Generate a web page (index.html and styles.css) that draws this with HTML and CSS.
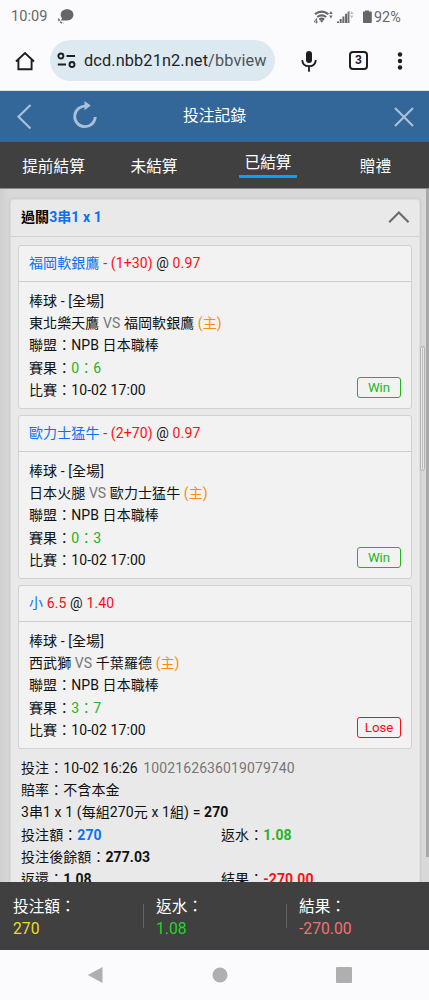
FILE: index.html
```html
<!DOCTYPE html>
<html lang="zh-Hant">
<head>
<meta charset="utf-8">
<title>投注記錄</title>
<link rel="stylesheet" href="styles.css">
</head>
<body>
<div class="status">
  <span class="clock">10:09</span>
  <svg class="chat" width="18" height="18" viewBox="0 0 18 18"><path d="M10 1.200c3.900 0 6.400 2.300 6.400 5.500s-2.500 5.700-6.300 5.700H3.800l1.300-2.200C4.200 9.300 3.700 8 3.700 6.700 3.700 3.500 6.200 1.200 10 1.200Z" fill="#666"/><path d="M1.500 10.600q.6 3.800 5 4.700" fill="none" stroke="#666" stroke-width="1.500" stroke-dasharray="2.500 1"/></svg>
  <svg class="signals" width="58" height="18" viewBox="0 0 58 18" fill="#666"><g fill="none" stroke="#666" stroke-width="2.100"><path d="M1 5.200q6.700-5 13.400 0M3.200 8q4.500-3.300 9 0M5.300 10.600q2.400-1.800 4.800 0"/></g><path d="m5.900 11.500 1.800 2.300 1.900-2.300q-1.800-1-3.700 0Z"/><path d="M2.600 9.500v5M2.500 9.500.3 13h3.500" fill="none" stroke="#666" stroke-width=".9"/><path d="m16.900 2 1.700 3h-3.400zM16.900 9.500l1.700-3h-3.400z"/><path d="M23 14v-1.500h2V14zm2.700 0v-4h2v4zm2.700 0V7.500h2V14zm2.700 0V4.800h2V14z"/><path d="M35.500 14V1.500l-2 2V14z" fill="#777"/><path d="m37.700 2 1.600 3h-3.200zM37.700 9.500l1.600-3h-3.200z" fill="#bbb"/><path d="M49 2.500h2v-1h4v1h2q.8 0 .8.800v9.900q0 .8-.8.800h-7.200q-.8 0-.8-.8z"/></svg>
  <span class="battery">92%</span>
</div>
<div class="browser">
  <svg class="home" width="20" height="20" viewBox="0 0 20 20"><path d="M1 10.500 10 2l9 8.500M3.400 9v9.200h13.200V9" fill="none" stroke="#1c1d1f" stroke-width="1.900"/></svg>
  <div class="address">
    <svg width="20" height="18" viewBox="0 0 20 18" fill="none" stroke="#1c1d1f" stroke-width="1.900"><circle cx="3.900" cy="4" r="2.500"/><path d="M9.500 4H18M.8 12.500H9"/><circle cx="15" cy="12.500" r="2.500"/></svg>
    <span class="url">dcd.nbb21n2.net<span class="path">/bbview</span></span>
  </div>
  <svg class="mic" width="18" height="24" viewBox="0 0 18 24"><rect x="6" y="2" width="6" height="12" rx="3" fill="#1c1d1f"/><path d="M2.300 11c0 4 2.700 6.200 6.700 6.200s6.700-2.200 6.700-6.200M9 17v5.700" fill="none" stroke="#1c1d1f" stroke-width="1.800"/></svg>
  <div class="tabcount">3</div>
  <svg class="menu" width="6" height="20" viewBox="0 0 6 20" fill="#1c1d1f"><circle cx="3" cy="3.500" r="2.200"/><circle cx="3" cy="10" r="2.200"/><circle cx="3" cy="16.500" r="2.200"/></svg>
</div>
<header class="titlebar">
  <svg width="16" height="26" viewBox="0 0 16 26"><path d="M14.500 1 2.500 12.700l12 11.800" fill="none" stroke="#a9c0d8" stroke-width="2.200"/></svg>
  <svg class="reload" width="26" height="30" viewBox="0 0 26 30"><path d="M14.300 6.200A10.300 10.300 0 1 0 23.300 17" fill="none" stroke="#a9c0d8" stroke-width="2.800"/><path d="m12.500 1 6.300 4.500-6.300 4.700z" fill="#a9c0d8"/></svg>
  <h1>投注記錄</h1>
  <svg class="close" width="20" height="20" viewBox="0 0 20 20"><path d="m1 1 18 18M19 1 1 19" fill="none" stroke="#a9c0d8" stroke-width="2.200"/></svg>
</header>
<nav class="tabs"><span>提前結算</span><span>未結算</span><span class="current">已結算</span><span>贈禮</span></nav>
<main class="content">
  <section class="panel">
    <div class="panel-head"><b>過關<span class="blue">3串1 x 1</span></b><svg width="22" height="14" viewBox="0 0 22 14"><path d="m1.200 12.200 9.700-9.700 9.700 9.700" fill="none" stroke="#6c6c6c" stroke-width="2.200"/></svg></div>
    <div class="cards">
      <article class="card">
        <div class="card-head"><span class="blue">福岡軟銀鷹</span> <span class="red">- (1+30)</span> @ <span class="red">0.97</span></div>
        <div class="card-body">
          <div class="facts"><p>棒球 - [全場]</p><p>東北樂天鷹 <span class="gray">VS</span> 福岡軟銀鷹 <span class="orange">(主)</span></p><p>聯盟：NPB 日本職棒</p><p>賽果：<span class="green">0：6</span></p><p>比賽：10-02 17:00</p></div>
          <span class="badge green">Win</span>
        </div>
      </article>
      <article class="card">
        <div class="card-head"><span class="blue">歐力士猛牛</span> <span class="red">- (2+70)</span> @ <span class="red">0.97</span></div>
        <div class="card-body">
          <div class="facts"><p>棒球 - [全場]</p><p>日本火腿 <span class="gray">VS</span> 歐力士猛牛 <span class="orange">(主)</span></p><p>聯盟：NPB 日本職棒</p><p>賽果：<span class="green">0：3</span></p><p>比賽：10-02 17:00</p></div>
          <span class="badge green">Win</span>
        </div>
      </article>
      <article class="card">
        <div class="card-head"><span class="blue">小</span> <span class="red">6.5</span> @ <span class="red">1.40</span></div>
        <div class="card-body">
          <div class="facts"><p>棒球 - [全場]</p><p>西武獅 <span class="gray">VS</span> 千葉羅德 <span class="orange">(主)</span></p><p>聯盟：NPB 日本職棒</p><p>賽果：<span class="green">3：7</span></p><p>比賽：10-02 17:00</p></div>
          <span class="badge red">Lose</span>
        </div>
      </article>
    </div>
    <div class="summary">
      <p>投注：10-02 16:26 <span class="gray serial">1002162636019079740</span></p>
      <p>賠率：不含本金</p>
      <p class="formula">3串1 x 1 (每組270元 x 1組) = <b>270</b></p>
      <div class="pair"><p>投注額：<b class="blue">270</b></p><p>返水：<b class="green">1.08</b></p></div>
      <p>投注後餘額：<b>277.03</b></p>
      <div class="pair"><p>返還：<b>1.08</b></p><p>結果：<b class="red">-270.00</b></p></div>
    </div>
  </section>
  <div class="inner-thumb"></div>
  <div class="outer-thumb"></div>
</main>
<footer class="totals">
  <div><span>投注額：</span><span class="yellow">270</span></div>
  <div><span>返水：</span><span class="lime">1.08</span></div>
  <div><span>結果：</span><span class="coral">-270.00</span></div>
</footer>
<div class="system-nav">
  <svg width="16" height="18" viewBox="0 0 16 18"><path d="M15.500 1v16L.8 9z" fill="#afafb0"/></svg>
  <svg width="16" height="16" viewBox="0 0 16 16"><circle cx="8" cy="8" r="7.500" fill="#afafb0"/></svg>
  <svg width="16" height="16" viewBox="0 0 16 16"><rect width="16" height="16" rx="1" fill="#afafb0"/></svg>
</div>
</body>
</html>
```
FILE: styles.css
```css
* { box-sizing: border-box; }
body { margin: 0; width: 429px; height: 1000px; overflow: hidden; display: flex; flex-direction: column; background: #fbfbfe; color: #111; font: 14px/22.2px Roboto, "Noto Sans CJK TC", sans-serif; letter-spacing: .08px; white-space: nowrap; }
p, h1 { margin: 0; }
svg { display: block; flex: none; }

.status { height: 32px; flex: none; display: flex; align-items: center; padding: 3px 27px 0 11px; color: #666; }
.clock { font-size: 14.5px; width: 37px; }
.chat { margin: -1px 0 0 9px; }
.signals { margin-left: auto; }
.battery { font-size: 14.3px; width: 28px; margin-left: 2px; }

.browser { height: 59px; flex: none; display: flex; align-items: center; padding: 0 26px 1px 15px; border-bottom: 1px solid #dfe0e4; }
.address { width: 225px; height: 41px; margin-left: 15px; border-radius: 21px; background: #dce9f1; display: flex; align-items: center; padding: 0 8px 0 7px; }
.url { margin: 2px 0 0 7px; width: 183px; overflow: hidden; font-size: 16.3px; color: #1f2326; letter-spacing: .13px; }
.path { color: #4c545a; }
.mic { margin-left: 25px; }
.tabcount { width: 19px; height: 19px; margin-left: 31px; border: 2px solid #1c1d1f; border-radius: 4px; font-weight: 700; font-size: 12px; line-height: 15px; text-align: center; color: #1c1d1f; }
.menu { margin-left: auto; }

.titlebar { height: 51px; flex: none; display: flex; align-items: center; padding: 0 15px 0 16px; background: #336699; color: #fff; }
.reload { margin: -4px 0 0 40px; }
.titlebar h1 { margin-left: 85px; font-size: 15.8px; font-weight: 400; letter-spacing: 0; }
.close { margin-left: auto; }

.tabs { height: 47px; flex: none; display: grid; grid-template-columns: 107px 94px 134px 94px; justify-items: center; align-items: center; background: #404040; border-bottom: 1px solid #888; color: #fff; font-size: 15.7px; line-height: 24px; letter-spacing: 0; }
.tabs span { margin-top: 3px; }
.tabs .current { width: 58px; height: 27px; text-align: center; border-bottom: 3px solid #00a3ff; border-radius: 1px; line-height: 23px; margin-top: -1px; }
.tabs span:nth-child(4) { margin-right: 13px; }

.content { height: 693px; flex: none; position: relative; overflow: hidden; padding: 10px 9px 0 10px; background: linear-gradient(90deg, #cfcfcf, #d8d8d8 9px, #d8d8d8); }
.panel { height: 700px; border: 1px solid #ddd; border-radius: 3px; background: #e9e9e9; box-shadow: 0 0 3px #bdbdbd; }
.panel-head { height: 37px; display: flex; justify-content: space-between; align-items: center; padding: 0 9px 2px 10px; border-bottom: 1px solid #d2d2d2; color: #000; }
.cards { padding: 8px 7px 0; display: grid; gap: 6px; }
.card { height: 164px; border: 1px solid #d1d1d1; border-radius: 3px; background: #f2f2f2; }
.card-head { height: 36px; padding: 6px 10px; border-bottom: 1px solid #cecece; letter-spacing: .12px; }
.card-body { display: flex; justify-content: space-between; align-items: flex-end; padding: 8px 10px 0; }
.badge { width: 44px; height: 21px; border: 1px solid; border-radius: 3px; text-align: center; line-height: 19px; font-size: 13.2px; letter-spacing: 0; margin-bottom: 3px; }
.summary { padding: 8px 10px 0; }
.pair { display: grid; grid-template-columns: 200px 1fr; }
.formula { letter-spacing: .1px; }
.serial { margin-left: 2px; letter-spacing: .1px; }
.blue { color: #0a70f5; }
.red { color: #ff0d14; }
.green { color: #21b51b; }
.orange { color: #ff8c0d; }
.gray { color: #777; }

.inner-thumb { position: absolute; right: 4px; top: 157px; width: 5px; height: 125px; border: 1px solid #b4b4b4; border-radius: 3px; background: #bbb; box-shadow: inset 0 0 0 1px #e8e8e8; }
.outer-thumb { position: absolute; right: 0; top: 0; width: 3px; height: 668px; background: #a9a9a9; }

.totals { height: 68px; flex: none; display: grid; grid-template-columns: 143px 143px 143px; align-items: center; background: #404040; color: #fff; font-size: 15.7px; line-height: 22px; letter-spacing: 0; }
.totals div { display: grid; padding: 4px 0 0 13px; position: relative; }
.totals div + div::before { content: ""; position: absolute; left: 0; top: 12px; height: 24px; border-left: 1px solid #646464; }
.yellow { color: #f1db22; }
.lime { color: #22d52a; }
.coral { color: #f47070; }

.system-nav { height: 50px; flex: none; display: flex; align-items: center; justify-content: space-between; padding: 0 77px 0 87px; }
```
